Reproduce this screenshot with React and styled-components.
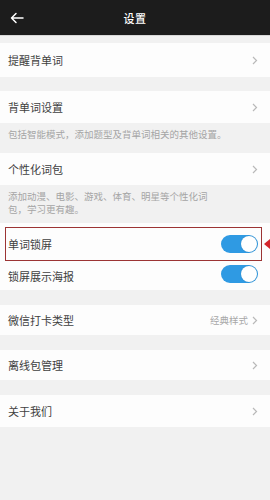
import React from "react";
import styled, { createGlobalStyle } from "styled-components";

const Global = createGlobalStyle`
  html, body { margin: 0; padding: 0; background: #f1f1f1; }
  body { font-family: "Noto Sans CJK SC", "Noto Sans", sans-serif; }
`;

const Page = styled.div`
  width: 270px;
  min-height: 500px;
  background: #f1f1f1;
  display: flex;
  flex-direction: column;
`;

const Header = styled.header`
  height: 35px;
  background: #1c1c1c;
  display: flex;
  align-items: center;
  justify-content: center;
  position: relative;
  border-bottom: 1px solid #d8d8d8;
`;

const Back = styled.button`
  position: absolute;
  left: 9px;
  top: 10px;
  width: 16px;
  height: 16px;
  padding: 0;
  border: 0;
  background: none;
  display: flex;
  align-items: center;
  justify-content: center;
`;

const Title = styled.h1`
  margin: 0;
  font-size: 11px;
  font-weight: 500;
  color: #ffffff;
  letter-spacing: 0.5px;
`;

const Group = styled.section`
  margin-top: ${(p) => p.$gap}px;
  display: flex;
  flex-direction: column;
`;

const Row = styled.div`
  height: ${(p) => p.$h}px;
  background: #fdfdfd;
  display: flex;
  align-items: center;
  justify-content: space-between;
  padding: ${(p) => p.$pt || 0}px 12px 0 8px;
  box-sizing: border-box;
  position: relative;
`;

const Label = styled.span`
  font-size: 11px;
  color: #404040;
`;

const Right = styled.span`
  display: flex;
  align-items: center;
  gap: 4px;
`;

const Value = styled.span`
  font-size: 9.5px;
  color: #a8a8a8;
`;

const Desc = styled.p`
  margin: 0;
  padding: ${(p) => p.$pt}px 8px 0 8px;
  height: ${(p) => p.$h}px;
  box-sizing: border-box;
  font-size: 9.5px;
  line-height: 13px;
  color: #a5a5a5;
`;

const Switch = styled.span`
  width: 37px;
  height: 18px;
  border-radius: 9px;
  background: #2f9ae3;
  position: relative;
  display: inline-block;
  margin-top: ${(p) => p.$mt || 0}px;
`;

const Knob = styled.span`
  position: absolute;
  right: 1px;
  top: 1px;
  width: 16px;
  height: 16px;
  border-radius: 50%;
  background: #ffffff;
  box-shadow: 0 0 1px rgba(0, 0, 0, 0.25);
`;

const Highlight = styled.span`
  position: absolute;
  left: 5px;
  right: 8px;
  top: 4px;
  bottom: 0;
  border: 1.5px solid #9c3434;
  pointer-events: none;
`;

const Pointer = styled.span`
  position: absolute;
  right: 0;
  top: 16px;
  width: 0;
  height: 0;
  border-top: 5px solid transparent;
  border-bottom: 5px solid transparent;
  border-right: 6px solid #d4252b;
`;

const Chevron = () => (
  <svg width="6" height="9" viewBox="0 0 6 9">
    <polyline points="1,1 4.5,4.5 1,8" fill="none" stroke="#b9b9b9" strokeWidth="1.2" />
  </svg>
);

const Toggle = ({ mt }) => (
  <Switch $mt={mt}>
    <Knob />
  </Switch>
);

export default function App() {
  return (
    <Page>
      <Global />
      <Header>
        <Back aria-label="back">
          <svg width="14" height="12" viewBox="0 0 14 12">
            <path d="M13 6H1.5M6 1.5L1.5 6 6 10.5" fill="none" stroke="#fff" strokeWidth="1.5" strokeLinecap="round" strokeLinejoin="round" />
          </svg>
        </Back>
        <Title>设置</Title>
      </Header>

      <Group $gap={7}>
        <Row $h={34}>
          <Label>提醒背单词</Label>
          <Chevron />
        </Row>
      </Group>

      <Group $gap={14}>
        <Row $h={32}>
          <Label>背单词设置</Label>
          <Chevron />
        </Row>
        <Desc $h={30} $pt={5}>包括智能模式，添加题型及背单词相关的其他设置。</Desc>
        <Row $h={32}>
          <Label>个性化词包</Label>
          <Chevron />
        </Row>
        <Desc $h={38} $pt={5}>
          添加动漫、电影、游戏、体育、明星等个性化词
          <br />
          包，学习更有趣。
        </Desc>
        <Row $h={38} $pt={4}>
          <Label>单词锁屏</Label>
          <Toggle />
          <Highlight />
          <Pointer />
        </Row>
        <Row $h={29}>
          <Label>锁屏展示海报</Label>
          <Toggle mt={-4} />
        </Row>
      </Group>

      <Group $gap={15}>
        <Row $h={30}>
          <Label>微信打卡类型</Label>
          <Right>
            <Value>经典样式</Value>
            <Chevron />
          </Right>
        </Row>
      </Group>

      <Group $gap={15}>
        <Row $h={30}>
          <Label>离线包管理</Label>
          <Chevron />
        </Row>
      </Group>

      <Group $gap={15}>
        <Row $h={32}>
          <Label>关于我们</Label>
          <Chevron />
        </Row>
      </Group>
    </Page>
  );
}
